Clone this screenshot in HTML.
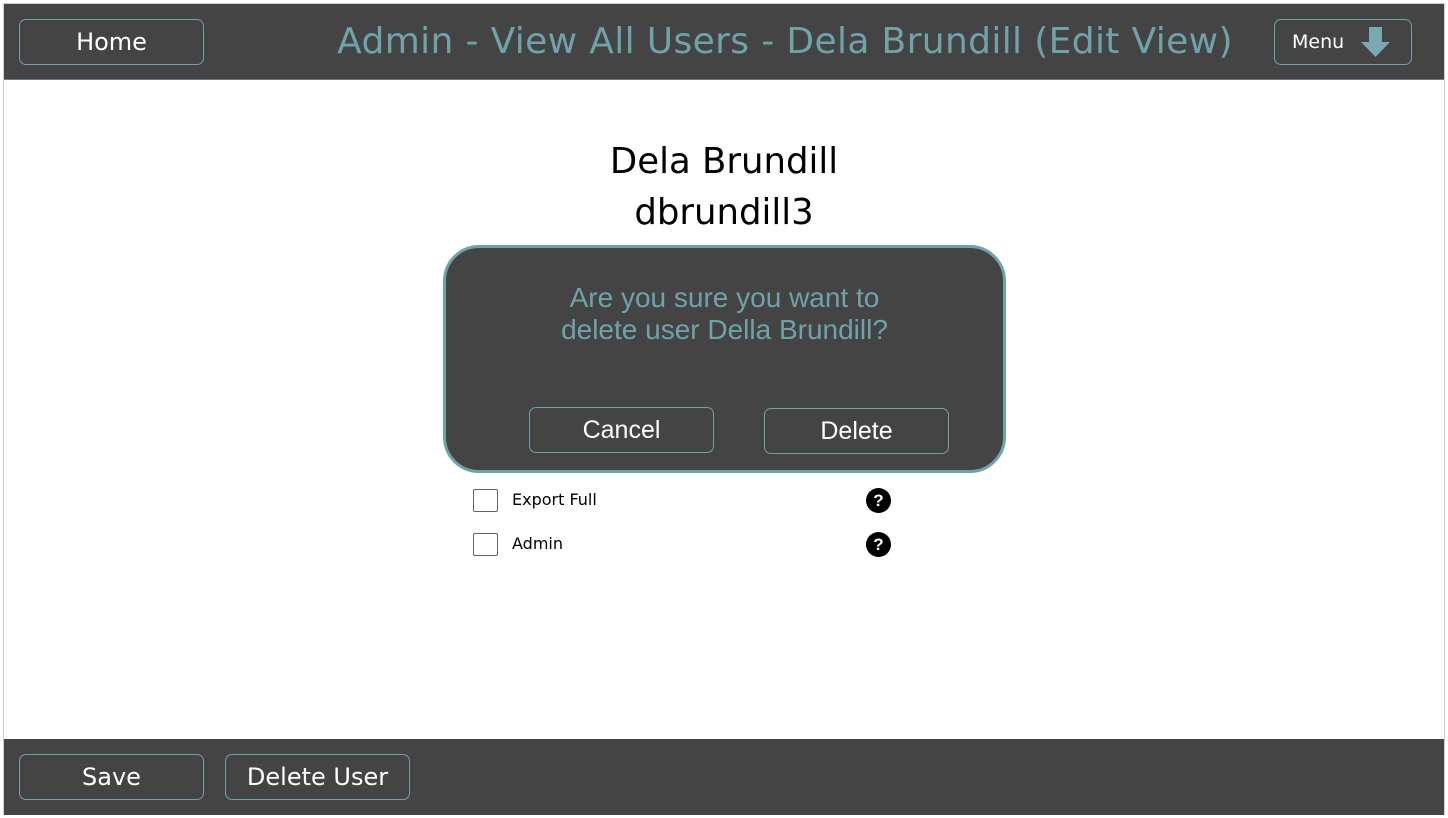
<!DOCTYPE html>
<html><head><meta charset="utf-8"><style>
*{box-sizing:border-box;margin:0;padding:0}
body{width:1448px;height:818px;background:#fff;position:relative;overflow:hidden;font-family:"DejaVu Sans",Verdana,sans-serif}
.frame{position:absolute;left:3px;top:3px;width:1442px;height:812px;border:1px solid #d0d0d0}
.bar{position:absolute;left:4px;width:1440px;height:76px;background:#444}
.btn{position:absolute;border:1.5px solid #6fa3ab;border-radius:7px;color:#fff;display:flex;align-items:center;justify-content:center;font-size:23px}
.title{position:absolute;left:300px;top:21px;width:970px;text-align:center;color:#6fa3ab;font-size:36px;white-space:nowrap;letter-spacing:0.36px}
.name{position:absolute;left:0;width:1448px;text-align:center;font-size:35.5px;color:#000}
.dlg{position:absolute;left:443px;top:245px;width:563px;height:228px;background:#444;border:3px solid #6fa3ab;border-radius:36px}
.dtext{position:absolute;left:0;top:34px;width:100%;text-align:center;color:#6fa3ab;font-family:"Liberation Sans",Arial,sans-serif;font-size:28px;line-height:32px}
.cb{position:absolute;left:473px;width:25px;height:23px;border:1.5px solid #5a6470;border-radius:2px}
.lbl{position:absolute;left:512px;font-size:16px;color:#000}
.q{position:absolute;left:866px;width:25px;height:25px;border-radius:50%;background:#000;color:#fff;font-weight:bold;font-size:17px;text-align:center;line-height:25px;font-family:"Liberation Sans",Arial,sans-serif}
</style></head><body>
<div class="frame"></div>
<div class="bar" style="top:4px;border-bottom:1px solid #6a7a8a"></div>
<div class="btn" style="left:19px;top:19px;width:185px;height:46px;font-size:24px">Home</div>
<div class="title">Admin - View All Users - Dela Brundill (Edit View)</div>
<div class="btn" style="left:1274px;top:19px;width:138px;height:46px;font-size:19px;justify-content:flex-start;padding-left:17px">Menu
<svg style="position:absolute;left:85px;top:6px" width="32" height="32" viewBox="0 0 32 32"><path d="M9 1h13v15h8L15.5 31 1 16h8z" fill="#7aa9b1"/></svg></div>
<div class="name" style="top:141px">Dela Brundill</div>
<div class="name" style="top:192px">dbrundill3</div>
<div class="dlg">
<div class="dtext">Are you sure you want to<br>delete user Della Brundill?</div>
<div class="btn" style="left:83px;top:159px;width:185px;height:46px;font-family:'Liberation Sans',Arial,sans-serif;font-size:25px">Cancel</div>
<div class="btn" style="left:318px;top:160px;width:185px;height:46px;font-family:'Liberation Sans',Arial,sans-serif;font-size:25px">Delete</div>
</div>
<div class="cb" style="top:489px"></div><div class="lbl" style="top:490px">Export Full</div><div class="q" style="top:488px">?</div>
<div class="cb" style="top:533px"></div><div class="lbl" style="top:534px">Admin</div><div class="q" style="top:532px">?</div>
<div class="bar" style="top:739px"></div>
<div class="btn" style="left:19px;top:754px;width:185px;height:46px;font-size:24px">Save</div>
<div class="btn" style="left:225px;top:754px;width:185px;height:46px;font-size:24px">Delete User</div>
</body></html>
